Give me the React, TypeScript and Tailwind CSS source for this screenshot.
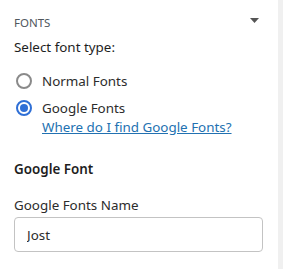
import { useState } from 'react';

export default function App() {
    const [type, setType] = useState('google');

    return (
        <div className="flex w-[283px] h-[269px] bg-white overflow-hidden" style={{ fontFamily: '"Noto Sans", sans-serif' }}>
            <div className="flex-1 pl-[14px] pr-[15px]">
                <div className="flex items-center justify-between h-[37px] pt-[9px]">
                    <span className="text-[11.5px] uppercase text-[#50575e]">Fonts</span>
                    <svg width="9" height="5" viewBox="0 0 9 5" className="mr-[4px] mt-[-6px]">
                        <path d="M0 0 H9 L4.5 5 Z" fill="#555" />
                    </svg>
                </div>

                <div className="text-[13.4px] text-[#1e1e1e] leading-[20px]">Select font type:</div>

                <div className="mt-[14px] flex flex-col gap-[7px]">
                    <label className="flex items-center gap-[10px] h-[20px] cursor-pointer" onClick={() => setType('normal')}>
                        <span className={
                            type === 'normal'
                                ? 'w-[16px] h-[16px] rounded-full border-[2px] border-[#2f6fd6] flex items-center justify-center ml-[2px]'
                                : 'w-[16px] h-[16px] rounded-full border-[2px] border-[#8a8a8a] ml-[2px]'
                        }>
                            {type === 'normal' && <span className="w-[8px] h-[8px] rounded-full bg-[#2f6fd6]" />}
                        </span>
                        <span className="text-[13.4px] text-[#2c2c2c]">Normal Fonts</span>
                    </label>
                    <div>
                        <label className="flex items-center gap-[10px] h-[20px] cursor-pointer" onClick={() => setType('google')}>
                            <span className={
                                type === 'google'
                                    ? 'w-[16px] h-[16px] rounded-full border-[2px] border-[#2f6fd6] flex items-center justify-center ml-[2px]'
                                    : 'w-[16px] h-[16px] rounded-full border-[2px] border-[#8a8a8a] ml-[2px]'
                            }>
                                {type === 'google' && <span className="w-[8px] h-[8px] rounded-full bg-[#2f6fd6]" />}
                            </span>
                            <span className="text-[13.4px] text-[#2c2c2c]">Google Fonts</span>
                        </label>
                        <a href="#" className="block ml-[28px] text-[13.4px] leading-[18px] text-[#2271b1] underline">
                            Where do I find Google Fonts?
                        </a>
                    </div>
                </div>

                <div className="mt-[23px] text-[13.4px] font-semibold text-[#1e1e1e] leading-[20px]">Google Font</div>

                <div className="mt-[16px] text-[13.4px] text-[#2c2c2c] leading-[20px]">Google Fonts Name</div>
                <input
                    defaultValue="Jost"
                    className="mt-[2px] w-full h-[35px] px-[12px] rounded-[4px] border border-[#c3c3c3] text-[13.4px] text-[#2c2c2c] outline-none"
                />
            </div>
            <div className="w-[5px] h-full bg-[#f0f0f0]" />
        </div>
    );
}
